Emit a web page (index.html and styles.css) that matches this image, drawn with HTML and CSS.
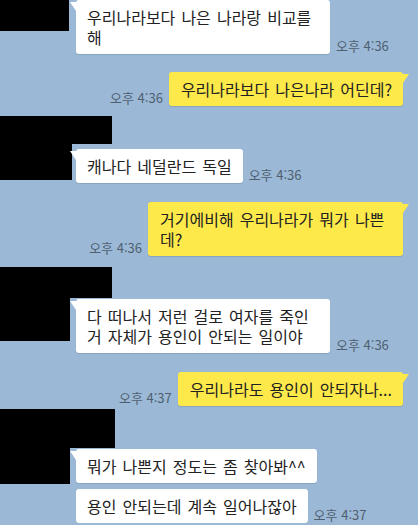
FILE: index.html
```html
<!DOCTYPE html>
<html lang="ko">
<head>
    <meta charset="UTF-8">
    <meta name="viewport" content="width=device-width, initial-scale=1.0">
    <title>채팅</title>
    <link rel="stylesheet" href="styles.css">
</head>
<body>
    <div class="chat">

        <div class="group">
            <div class="redact avatar av-1"></div>
            <div class="lines">
                <div class="row">
                    <div class="bubble tail">우리나라보다 나은 나라랑 비교를 해</div>
                    <span class="time">오후 4:36</span>
                </div>
            </div>
        </div>

        <div class="row mine mine-1">
            <span class="time">오후 4:36</span>
            <div class="bubble tail">우리나라보다 나은나라 어딘데?</div>
        </div>

        <div class="group group-2">
            <div class="redact avatar av-2"></div>
            <div class="redact name name-2"></div>
            <div class="lines">
                <div class="row">
                    <div class="bubble tail">캐나다 네덜란드 독일</div>
                    <span class="time">오후 4:36</span>
                </div>
            </div>
        </div>

        <div class="row mine mine-2">
            <span class="time">오후 4:36</span>
            <div class="bubble tail">거기에비해 우리나라가 뭐가 나쁜데?</div>
        </div>

        <div class="group group-3">
            <div class="redact avatar av-3"></div>
            <div class="redact name name-3"></div>
            <div class="lines">
                <div class="row">
                    <div class="bubble tail">다 떠나서 저런 걸로 여자를 죽인 거 자체가 용인이 안되는 일이야</div>
                    <span class="time">오후 4:36</span>
                </div>
            </div>
        </div>

        <div class="row mine mine-3">
            <span class="time">오후 4:37</span>
            <div class="bubble tail">우리나라도 용인이 안되자나...</div>
        </div>

        <div class="group group-4">
            <div class="redact avatar av-4"></div>
            <div class="redact name name-4"></div>
            <div class="lines">
                <div class="row">
                    <div class="bubble tail">뭐가 나쁜지 정도는 좀 찾아봐^^</div>
                </div>
                <div class="row">
                    <div class="bubble">용인 안되는데 계속 일어나잖아</div>
                    <span class="time">오후 4:37</span>
                </div>
            </div>
        </div>

    </div>
</body>
</html>
```

FILE: styles.css
```css
body {
    margin: 0;
    padding: 0;
    background-color: #9bb9d6;
    font-family: "Noto Sans CJK KR", "Noto Sans", sans-serif;
    color: #222;
    overflow: hidden;
}
.chat {
    display: flex;
    flex-direction: column;
    padding-right: 15px;
}

/* 상대방 메시지 묶음 */
.group {
    display: grid;
    grid-template-columns: 76px 1fr;
}
.redact { background-color: #000; }
.avatar {
    grid-column: 1;
    grid-row: 1 / span 2;
    align-self: start;
}
.name {
    grid-column: 1 / span 2;
    grid-row: 1;
}
.lines {
    grid-column: 2;
    grid-row: 2;
    display: flex;
    flex-direction: column;
    gap: 6px;
}

.av-1 { width: 69px; height: 31px; }
.av-2 { width: 72px; height: 64px; }
.av-3 { width: 70px; height: 74px; }
.av-4 { width: 70px; height: 75px; }
.name-2 { width: 112px; height: 28px; margin-bottom: 5px; }
.name-3 { width: 112px; height: 31px; margin-bottom: 1px; }
.name-4 { width: 115px; height: 39px; margin-bottom: 1px; }

.group-2 { margin-top: 10px; }
.group-3 { margin-top: 11px; }
.group-4 { margin-top: 3px; }
.mine-1 { margin-top: 18px; }
.mine-2 { margin-top: 19px; }
.mine-3 { margin-top: 19px; }

.row {
    display: flex;
    align-items: flex-end;
    gap: 6px;
}
.row.mine { justify-content: flex-end; }

.bubble {
    position: relative;
    box-sizing: border-box;
    max-width: 254px;
    padding: 7px 11px 7px 11px;
    background-color: #fff;
    border-radius: 3px;
    box-shadow: 0 1px 1px rgba(0, 0, 0, 0.12);
    font-size: 16px;
    line-height: 20px;
    word-spacing: 1.6px;
}
.mine .bubble {
    max-width: 255px;
    padding-left: 12px;
    background-color: #fee94a;
}

/* 말풍선 꼬리 */
.bubble.tail::before {
    content: "";
    position: absolute;
    top: 2px;
    left: -6px;
    width: 0;
    height: 0;
    border-top: 9px solid #fff;
    border-left: 6px solid transparent;
}
.mine .bubble.tail::before {
    left: auto;
    right: -6px;
    border-top-color: #fee94a;
    border-left: none;
    border-right: 6px solid transparent;
}

.time {
    flex-shrink: 0;
    font-size: 13px;
    line-height: 16px;
    color: #4f5f70;
    white-space: nowrap;
}
```
